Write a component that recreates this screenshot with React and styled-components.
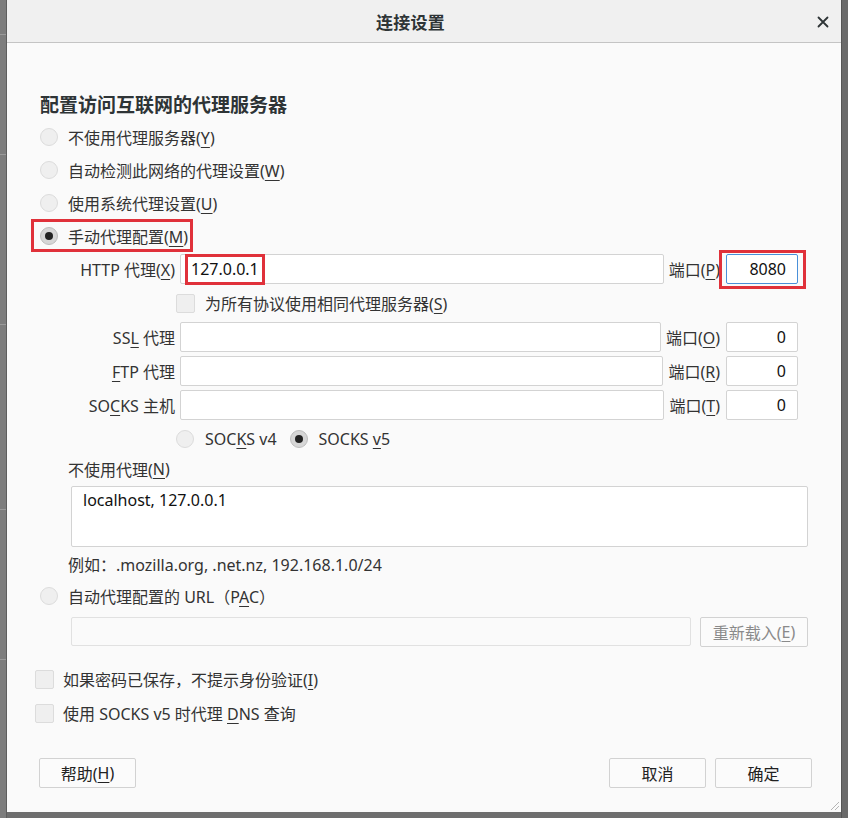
import React from "react";
import styled, { createGlobalStyle } from "styled-components";

const Global = createGlobalStyle`
  html, body { margin: 0; padding: 0; }
  body {
    background: #767676;
    font-family: "Noto Sans", "Noto Sans CJK SC", sans-serif;
    font-size: 16px;
    color: #333;
  }
  * { box-sizing: border-box; }
`;

const Backdrop = styled.div`
  width: 848px;
  height: 818px;
  display: grid;
  grid-template-columns: 7px 834px 7px;
  grid-template-rows: 812px 6px;
  background: #6f6f6f;
  overflow: hidden;
`;

const LeftStrip = styled.div`
  grid-column: 1;
  grid-row: 1 / span 2;
  background: #7d7d7d;
  border-right: 1px solid #5e5e5e;
  display: flex;
  flex-direction: column;
  overflow: hidden;
`;

const StripLine = styled.div`
  height: ${(p) => p.$h}px;
  flex: 0 0 ${(p) => p.$h}px;
  border-bottom: 1px solid ${(p) => (p.$line ? "#9a9a9a" : "transparent")};
`;

const RightStrip = styled.div`
  grid-column: 3;
  grid-row: 1 / span 2;
  background: #6a6a6a;
  border-left: 1px solid #555;
`;

const BottomStrip = styled.div`
  grid-column: 2;
  grid-row: 2;
  background: #6e6e6e;
`;

const Dialog = styled.div`
  grid-column: 2;
  grid-row: 1;
  background: #fafafa;
  display: flex;
  flex-direction: column;
  position: relative;
  min-width: 0;
`;

const TitleBar = styled.div`
  height: 43px;
  flex: 0 0 43px;
  background: #f0f0f0;
  border-bottom: 1px solid #c4c4c4;
  display: flex;
  align-items: center;
  justify-content: center;
  padding-right: 27px;
  position: relative;
`;

const Title = styled.div`
  font-size: 17px;
  font-weight: 700;
  color: #2e3436;
  letter-spacing: 0.3px;
`;

const CloseBtn = styled.div`
  position: absolute;
  right: 8px;
  top: 12px;
  width: 20px;
  height: 20px;
  display: flex;
  align-items: center;
  justify-content: center;
`;

const Body = styled.div`
  flex: 1;
  padding: 44px 29px 0 33px;
  display: flex;
  flex-direction: column;
`;

const Heading = styled.div`
  height: 33px;
  display: flex;
  align-items: center;
  font-size: 19px;
  font-weight: 700;
  color: #2e3436;
`;

const OptRow = styled.label`
  height: ${(p) => p.$h || 33}px;
  display: flex;
  align-items: center;
  gap: 10px;
  color: #333;
  position: relative;
  align-self: flex-start;
`;

const Radio = styled.span`
  width: 18px;
  height: 18px;
  border-radius: 50%;
  flex: 0 0 18px;
  background: ${(p) => (p.$on ? "#d6d6d6" : "#efefef")};
  border: 1px solid ${(p) => (p.$on ? "#bdbdbd" : "#dcdcdc")};
  display: flex;
  align-items: center;
  justify-content: center;
  &::after {
    content: "";
    width: 8px;
    height: 8px;
    border-radius: 50%;
    background: #222;
    display: ${(p) => (p.$on ? "block" : "none")};
  }
`;

const Check = styled.span`
  width: 19px;
  height: 19px;
  flex: 0 0 19px;
  background: #efefef;
  border: 1px solid #dcdcdc;
  border-radius: 2px;
`;

const U = styled.u`
  text-decoration-thickness: 1px;
  text-underline-offset: 3px;
`;

const Mark = styled.span`
  position: absolute;
  left: ${(p) => p.$l}px;
  top: ${(p) => p.$t}px;
  right: ${(p) => p.$r}px;
  bottom: ${(p) => p.$b}px;
  border: 3px solid #e0313a;
  pointer-events: none;
`;

const ProxyBlock = styled.div`
  margin-left: 28px;
  margin-right: 14px;
  display: flex;
  flex-direction: column;
`;

const ProxyRow = styled.div`
  height: 34px;
  display: flex;
  align-items: center;
`;

const FieldLabel = styled.div`
  width: 108px;
  flex: 0 0 108px;
  text-align: right;
  padding-right: 1px;
  white-space: nowrap;
  color: #333;
`;

const TextBox = styled.div`
  height: 30px;
  background: #fff;
  border: 1px solid ${(p) => (p.$focus ? "#4a90d9" : "#d3d3d3")};
  border-radius: 2px;
  display: flex;
  align-items: center;
  padding: 0 9px;
  color: #111;
  position: relative;
  justify-content: ${(p) => (p.$right ? "flex-end" : "flex-start")};
`;

const HostBox = styled(TextBox)`
  flex: 1;
  margin-left: 4px;
  padding-left: 10px;
`;

const PortLabel = styled.div`
  padding: 0 5px;
  white-space: nowrap;
  color: #333;
`;

const PortBox = styled(TextBox)`
  width: 72px;
  flex: 0 0 72px;
  margin-left: 1px;
  padding-right: 11px;
`;

const MarkWrap = styled.span`
  position: relative;
  display: inline-flex;
  align-items: center;
`;

const Indented = styled.div`
  margin-left: 108px;
  height: ${(p) => p.$h}px;
  display: flex;
  align-items: center;
  gap: ${(p) => p.$gap || 10}px;
`;

const SocksItem = styled.span`
  display: flex;
  align-items: center;
  gap: 11px;
`;

const PlainLine = styled.div`
  height: ${(p) => p.$h}px;
  display: flex;
  align-items: center;
  color: #333;
  white-space: nowrap;
`;

const TextArea = styled.div`
  margin: 3px -10px 0 3px;
  height: 61px;
  background: #fff;
  border: 1px solid #d3d3d3;
  border-radius: 2px;
  padding: 3px 11px;
  color: #111;
  line-height: 20px;
`;

const PacRow = styled.div`
  margin: 6px 4px 0 31px;
  display: flex;
  gap: 9px;
  height: 29px;
`;

const PacInput = styled.div`
  flex: 1;
  background: #fafafa;
  border: 1px solid #e1e1e1;
  border-radius: 2px;
`;

const Button = styled.div`
  width: ${(p) => p.$w || 97}px;
  height: 30px;
  background: #fbfbfb;
  border: 1px solid #d2d2d2;
  border-radius: 2px;
  display: flex;
  align-items: center;
  justify-content: center;
  white-space: nowrap;
  color: ${(p) => (p.$disabled ? "#8a8a8a" : "#222")};
`;

const CheckGroup = styled.div`
  margin-top: 16px;
  margin-left: -5px;
  display: flex;
  flex-direction: column;
`;

const CheckRow = styled.label`
  height: 34px;
  display: flex;
  align-items: center;
  gap: 9px;
  color: #333;
`;

const Footer = styled.div`
  margin-top: 28px;
  margin-left: -1px;
  display: flex;
  align-items: center;
  gap: 9px;
`;

const Spacer = styled.div`
  flex: 1;
`;

const Grip = styled.svg`
  position: absolute;
  right: 1px;
  bottom: 1px;
`;

export default function App() {
  return (
    <>
      <Global />
      <Backdrop>
        <LeftStrip>
          <StripLine $h={35} $line />
          <StripLine $h={120} $line />
          <StripLine $h={170} $line />
          <StripLine $h={185} $line />
          <StripLine $h={150} $line />
        </LeftStrip>
        <Dialog>
          <TitleBar>
            <Title>连接设置</Title>
            <CloseBtn>
              <svg width="12" height="12" viewBox="0 0 12 12">
                <path d="M1.5 1.5 L10.5 10.5 M10.5 1.5 L1.5 10.5" stroke="#2e3436" strokeWidth="1.8" strokeLinecap="round" />
              </svg>
            </CloseBtn>
          </TitleBar>
          <Body>
            <Heading>配置访问互联网的代理服务器</Heading>
            <OptRow>
              <Radio />
              <span>不使用代理服务器(<U>Y</U>)</span>
            </OptRow>
            <OptRow>
              <Radio />
              <span>自动检测此网络的代理设置(<U>W</U>)</span>
            </OptRow>
            <OptRow>
              <Radio />
              <span>使用系统代理设置(<U>U</U>)</span>
            </OptRow>
            <OptRow>
              <Radio $on />
              <span>手动代理配置(<U>M</U>)</span>
              <Mark $l={-9} $t={0} $r={-5} $b={0} />
            </OptRow>

            <ProxyBlock>
              <ProxyRow>
                <FieldLabel>HTTP 代理(<U>X</U>)</FieldLabel>
                <HostBox>
                  <MarkWrap>
                    127.0.0.1
                    <Mark $l={-6} $t={-4} $r={-6} $b={-5} />
                  </MarkWrap>
                </HostBox>
                <PortLabel>端口(<U>P</U>)</PortLabel>
                <PortBox $focus $right>
                  8080
                  <Mark $l={-8} $t={-5} $r={-9} $b={-6} />
                </PortBox>
              </ProxyRow>
              <Indented $h={34}>
                <Check />
                <span>为所有协议使用相同代理服务器(<U>S</U>)</span>
              </Indented>
              <ProxyRow>
                <FieldLabel>SS<U>L</U> 代理</FieldLabel>
                <HostBox />
                <PortLabel>端口(<U>O</U>)</PortLabel>
                <PortBox $right>0</PortBox>
              </ProxyRow>
              <ProxyRow>
                <FieldLabel><U>F</U>TP 代理</FieldLabel>
                <HostBox />
                <PortLabel>端口(<U>R</U>)</PortLabel>
                <PortBox $right>0</PortBox>
              </ProxyRow>
              <ProxyRow>
                <FieldLabel>SO<U>C</U>KS 主机</FieldLabel>
                <HostBox />
                <PortLabel>端口(<U>T</U>)</PortLabel>
                <PortBox $right>0</PortBox>
              </ProxyRow>
              <Indented $h={33} $gap={13}>
                <SocksItem>
                  <Radio />
                  <span>SOC<U>K</U>S v4</span>
                </SocksItem>
                <SocksItem>
                  <Radio $on />
                  <span>SOCKS <U>v</U>5</span>
                </SocksItem>
              </Indented>
              <PlainLine $h={28}>不使用代理(<U>N</U>)</PlainLine>
              <TextArea>localhost, 127.0.0.1</TextArea>
              <PlainLine $h={34}>例如：.mozilla.org, .net.nz, 192.168.1.0/24</PlainLine>
            </ProxyBlock>

            <OptRow $h={30}>
              <Radio />
              <span>自动代理配置的 URL（P<U>A</U>C）</span>
            </OptRow>
            <PacRow>
              <PacInput />
              <Button $w={108} $disabled>重新载入(<U>E</U>)</Button>
            </PacRow>

            <CheckGroup>
              <CheckRow>
                <Check />
                <span>如果密码已保存，不提示身份验证(<U>I</U>)</span>
              </CheckRow>
              <CheckRow>
                <Check />
                <span>使用 SOCKS v5 时代理 <U>D</U>NS 查询</span>
              </CheckRow>
            </CheckGroup>

            <Footer>
              <Button>帮助(<U>H</U>)</Button>
              <Spacer />
              <Button>取消</Button>
              <Button>确定</Button>
            </Footer>
          </Body>
          <Grip width="12" height="12" viewBox="0 0 12 12">
            <path d="M11 3 L3 11 M11 7 L7 11" stroke="#b5b5b5" strokeWidth="1" />
          </Grip>
        </Dialog>
        <RightStrip />
        <BottomStrip />
      </Backdrop>
    </>
  );
}
